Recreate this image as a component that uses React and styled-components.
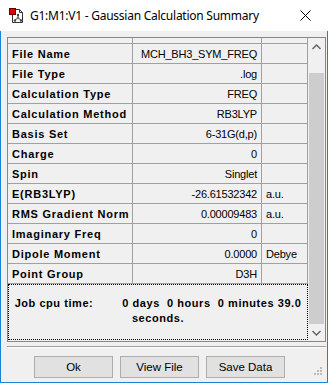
import styled, { createGlobalStyle } from "styled-components";

const Global = createGlobalStyle`
  html, body { margin: 0; padding: 0; background: #fff; }
  * { box-sizing: border-box; }
`;

const Window = styled.div`
  width: 328px;
  height: 383px;
  border: 1px solid #1883d7;
  border-top: none;
  background: #f0f0f0;
  display: flex;
  flex-direction: column;
  font-family: "Liberation Sans", Arial, sans-serif;
  position: relative;
`;

const TitleBar = styled.div`
  height: 31px;
  background: #fff;
  display: flex;
  align-items: center;
  padding-left: 9px;
  margin: 0 -1px;
  color: #000;
  font-family: "Noto Sans", "Open Sans", sans-serif;
  font-size: 12px;
  span {
    margin-left: 5px;
    flex: 1;
    letter-spacing: -0.25px;
  }
`;

const Close = styled.div`
  width: 28px;
  height: 31px;
  display: flex;
  align-items: center;
  justify-content: flex-start;
`;

const Body = styled.div`
  flex: 1;
  padding: 6px 1px 0 6px;
  display: flex;
  flex-direction: column;
`;

const Frame = styled.div`
  height: 305px;
  border: 1px solid #828790;
  display: flex;
`;

const TableArea = styled.div`
  width: 300px;
  display: flex;
  flex-direction: column;
`;

const HeadStrip = styled.div`
  height: 6px;
  border-bottom: 1px solid #a0a0a0;
  display: grid;
  grid-template-columns: 125px 129px 46px;
  div { border-right: 1px solid #a0a0a0; }
`;

const Row = styled.div`
  height: 20px;
  display: grid;
  grid-template-columns: 125px 129px 46px;
  border-bottom: 1px solid #a0a0a0;
  font-size: 11px;
  color: #000;
`;

const Cell = styled.div`
  border-right: 1px solid #a0a0a0;
  display: flex;
  align-items: center;
  white-space: nowrap;
  overflow: hidden;
  padding: ${(p) => (p.$align === "right" ? "0 4px 0 0" : "0 0 0 4px")};
  justify-content: ${(p) => (p.$align === "right" ? "flex-end" : "flex-start")};
  font-weight: ${(p) => (p.$bold ? 700 : 400)};
  letter-spacing: ${(p) => (p.$bold ? "0.75px" : "-0.2px")};
  padding-top: 1px;
`;

const Footer = styled.div`
  height: 56px;
  border: 1px dotted #000;
  display: flex;
  flex-direction: column;
  align-items: center;
  justify-content: center;
  font-size: 11px;
  font-weight: 700;
  letter-spacing: 0.55px;
  line-height: 15px;
  color: #000;
  padding-bottom: 3px;
  white-space: nowrap;
  b { margin-right: 29px; }
`;

const ScrollBar = styled.div`
  width: 17px;
  display: flex;
  flex-direction: column;
  background: #f0f0f0;
`;

const Arrow = styled.div`
  height: 17px;
  display: flex;
  align-items: center;
  justify-content: center;
`;

const Track = styled.div`
  flex: 1;
  display: flex;
  flex-direction: column;
  padding: 18px 1px 0 1px;
`;

const Thumb = styled.div`
  flex: 1;
  background: #cdcdcd;
`;

const Separator = styled.div`
  height: 1px;
  background: #a0a0a0;
  margin-top: 4px;
  border-bottom: 1px solid #fff;
  box-sizing: content-box;
`;

const ButtonRow = styled.div`
  display: flex;
  gap: 7px;
  padding: 8px 0 0 27px;
`;

const Button = styled.button`
  width: 79px;
  height: 22px;
  border: 1px solid #adadad;
  background: #e1e1e1;
  font-family: "Liberation Sans", Arial, sans-serif;
  font-size: 11.5px;
  color: #000;
  padding: 0;
`;

const Grip = styled.svg`
  position: absolute;
  right: 5px;
  bottom: 7px;
`;

const rows = [
  ["File Name", "MCH_BH3_SYM_FREQ", ""],
  ["File Type", ".log", ""],
  ["Calculation Type", "FREQ", ""],
  ["Calculation Method", "RB3LYP", ""],
  ["Basis Set", "6-31G(d,p)", ""],
  ["Charge", "0", ""],
  ["Spin", "Singlet", ""],
  ["E(RB3LYP)", "-26.61532342", "a.u."],
  ["RMS Gradient Norm", "0.00009483", "a.u."],
  ["Imaginary Freq", "0", ""],
  ["Dipole Moment", "0.0000", "Debye"],
  ["Point Group", "D3H", ""],
];

function AppIcon() {
  return (
    <svg width="16" height="16" viewBox="0 0 16 16">
      <path d="M3.5 1.5h7l3 3v10h-10z" fill="#fff" stroke="#333" />
      <path d="M10.5 1.5v3h3" fill="none" stroke="#333" />
      <rect x="0.5" y="0.5" width="6" height="6" fill="#e00000" stroke="#600" />
      <g stroke="#555" strokeWidth="1">
        <line x1="9" y1="7" x2="9" y2="10" />
        <line x1="9" y1="10" x2="6" y2="12" />
        <line x1="9" y1="10" x2="12" y2="12" />
      </g>
      <circle cx="9" cy="7" r="1.2" fill="#444" />
      <circle cx="9" cy="10" r="1.4" fill="#777" />
      <circle cx="6" cy="12.5" r="1.2" fill="#444" />
      <circle cx="12" cy="12.5" r="1.2" fill="#444" />
    </svg>
  );
}

export default function App() {
  return (
    <Window>
      <Global />
      <TitleBar>
        <AppIcon />
        <span>G1:M1:V1 - Gaussian Calculation Summary</span>
        <Close>
          <svg width="11" height="11" viewBox="0 0 11 11">
            <path d="M0.5 0.5L10.5 10.5M10.5 0.5L0.5 10.5" stroke="#000" strokeWidth="1" />
          </svg>
        </Close>
      </TitleBar>
      <Body>
        <Frame>
          <TableArea>
            <HeadStrip>
              <div />
              <div />
              <div />
            </HeadStrip>
            {rows.map(([label, value, unit]) => (
              <Row key={label}>
                <Cell $bold>{label}</Cell>
                <Cell $align="right">{value}</Cell>
                <Cell>{unit}</Cell>
              </Row>
            ))}
            <Footer>
              <div>
                <b>Job cpu time:</b>0 days&nbsp;&nbsp;0 hours&nbsp;&nbsp;0 minutes 39.0
              </div>
              <div>seconds.</div>
            </Footer>
          </TableArea>
          <ScrollBar>
            <Arrow>
              <svg width="9" height="6" viewBox="0 0 9 6">
                <path d="M0.5 5L4.5 1L8.5 5" fill="none" stroke="#606060" strokeWidth="1.4" />
              </svg>
            </Arrow>
            <Track>
              <Thumb />
            </Track>
            <Arrow>
              <svg width="9" height="6" viewBox="0 0 9 6">
                <path d="M0.5 1L4.5 5L8.5 1" fill="none" stroke="#606060" strokeWidth="1.4" />
              </svg>
            </Arrow>
          </ScrollBar>
        </Frame>
        <Separator />
        <ButtonRow>
          <Button>Ok</Button>
          <Button>View File</Button>
          <Button>Save Data</Button>
        </ButtonRow>
      </Body>
      <Grip width="9" height="9" viewBox="0 0 9 9">
        {[
          [7, 1],
          [4, 4],
          [7, 4],
          [1, 7],
          [4, 7],
          [7, 7],
        ].map(([x, y]) => (
          <rect key={x + "-" + y} x={x} y={y} width="2" height="2" fill="#bcbcbc" />
        ))}
      </Grip>
    </Window>
  );
}
